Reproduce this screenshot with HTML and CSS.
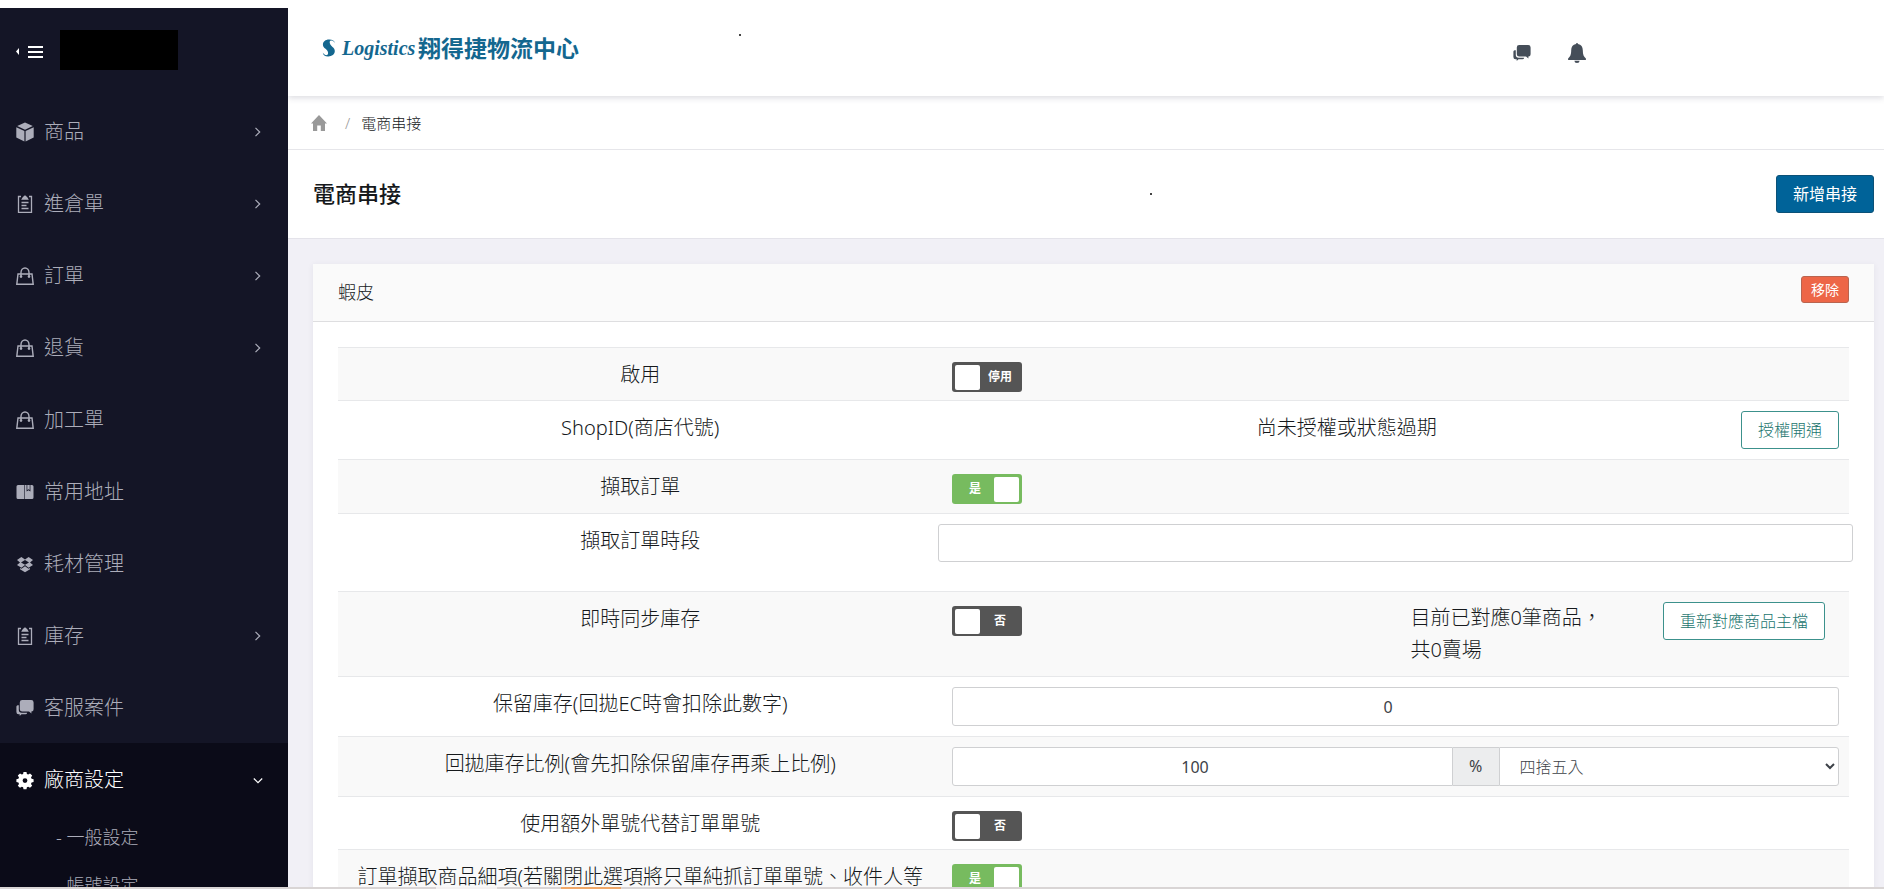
FILE: index.html
```html
<!DOCTYPE html>
<html lang="zh-Hant">
<head>
<meta charset="utf-8">
<meta name="viewport" content="width=device-width, initial-scale=1">
<title>電商串接</title>
<link rel="stylesheet" href="styles.css">
</head>
<body>
<svg class="sprite" aria-hidden="true">
  <symbol id="i-box" viewBox="0 0 18 20"><path fill="currentColor" d="M9 .4 16.800 4 9 7.700 1.200 4zM.3 5.300 8.400 9.100v10.500L.3 15.600zM17.700 5.300 9.600 9.100v10.500l8.100-4z"/></symbol>
  <symbol id="i-clip" viewBox="0 0 18 20"><path fill="none" stroke="currentColor" stroke-width="1.300" d="M5 2.500H2.500v15.800h13V2.500H13M5.500 8.500h7M5.500 11.500h5M5.500 14.500h7"/><path fill="currentColor" d="M5.200 5.800 6.500 3.500 7.500 2.500a1.600 1.600 0 0 1 3 0l1 1 1.300 2.300z"/></symbol>
  <symbol id="i-bag" viewBox="0 0 18 20"><path fill="none" stroke="currentColor" stroke-width="1.400" d="M2 8h14l1.200 10.300H.8zM5 11V6.500a4 4.500 0 0 1 8 0V11"/><circle cx="5" cy="10.600" r="1.300" fill="currentColor"/><circle cx="13" cy="10.600" r="1.300" fill="currentColor"/></symbol>
  <symbol id="i-book" viewBox="0 0 18 20"><path fill="currentColor" d="M2 3h6v14H2a1.500 1.500 0 0 1-1.500-1.500v-11A1.500 1.500 0 0 1 2 3zM8.600 3h2v6.500l1.900-1.300 1.900 1.300V3H16a1.500 1.500 0 0 1 1.500 1.500v11A1.500 1.500 0 0 1 16 17H8.600zM11.300 3h2.400v5l-1.200-.8-1.200.8z"/></symbol>
  <symbol id="i-drop" viewBox="0 0 18 20"><path fill="currentColor" d="m5.400 3 3.600 2.400L12.600 3 17 5.900l-3 2.500 3 2.500-4.400 2.900L9 11.100l-3.600 2.700L1 10.900l3-2.500-3-2.500zM9 6l-4 2.400L9 10.800l4-2.400zM9 12.200l3.600 2.600 1.400-.8v1.200L9 18.200l-5-3V14l1.400.8z"/></symbol>
  <symbol id="i-chat" viewBox="0 0 18 20"><path fill="currentColor" d="M6.200 2h9a2.400 2.400 0 0 1 2.400 2.400v6.800a2.400 2.400 0 0 1-2.200 2.400v2L13 13.600H6.200a2.400 2.400 0 0 1-2.400-2.400V4.400A2.400 2.400 0 0 1 6.200 2zM2.800 7.200v4.600a2.900 2.900 0 0 0 2.900 2.900h5.500a1.800 1.800 0 0 1-1.800 1.500H5.500L3.700 18v-1.800H2.600a2.200 2.200 0 0 1-2.200-2.200V8.500a1.600 1.600 0 0 1 1.200-1.300z"/></symbol>
  <symbol id="i-gear" viewBox="0 0 18 20"><path fill="currentColor" fill-rule="evenodd" d="M7.500 2h3l.4 2 1.300.6 1.800-1.100 2.200 2.100-1.200 1.800.6 1.400 2 .4v2.900l-2 .4-.6 1.400 1.200 1.800-2.200 2.100-1.800-1.100-1.300.6-.4 2h-3l-.4-2-1.300-.6L4 17.800l-2.200-2.100L3 13.900l-.6-1.400-2-.4V9.200l2-.4L3 7.400 1.800 5.600 4 3.500l1.800 1.100L7.100 4zM9 8.200a2.400 2.400 0 1 0 0 4.800 2.400 2.400 0 0 0 0-4.800z"/></symbol>
  <symbol id="i-bell" viewBox="0 0 18 20"><path fill="currentColor" d="M8 1a1 1 0 0 1 2 0c3.200.5 4.800 3 4.800 6.300 0 4.500 1 6.500 3.100 8.200v1.600H.1v-1.600c2.100-1.700 3.100-3.700 3.100-8.200C3.200 4 4.800 1.500 8 1zM6.400 17.800h5.200a2.600 2.200 0 0 1-5.200 0z"/></symbol>
  <symbol id="i-home" viewBox="0 0 16 16"><path fill="currentColor" d="m8 0 8 8.500h-2V16H9.800v-5.500H6.200V16H2V8.500H0z"/></symbol>
  <symbol id="i-next" viewBox="0 0 10 10"><path fill="none" stroke="currentColor" stroke-width="1.200" d="m2.500.8 4.200 4.200-4.200 4.200"/></symbol>
  <symbol id="i-down" viewBox="0 0 10 10"><path fill="none" stroke="currentColor" stroke-width="1.200" d="M.8 3.500 5 7.700l4.200-4.200"/></symbol>
</svg>

<div class="app">
  <nav class="sidebar" aria-label="主選單">
    <div class="brand">
      <button class="menu-btn" type="button" aria-label="收合選單">
        <svg width="28" height="14" viewBox="0 0 28 14"><path fill="currentColor" d="M3 3v7L0 6.500zM12 1h15v2H12zM12 6h15v2H12zM12 11h15v2H12z"/></svg>
      </button>
      <span class="account"></span>
    </div>
    <ul class="menu">
      <li><a href="#"><svg class="icon"><use href="#i-box"/></svg><span>商品</span><svg class="arrow"><use href="#i-next"/></svg></a></li>
      <li><a href="#"><svg class="icon"><use href="#i-clip"/></svg><span>進倉單</span><svg class="arrow"><use href="#i-next"/></svg></a></li>
      <li><a href="#"><svg class="icon"><use href="#i-bag"/></svg><span>訂單</span><svg class="arrow"><use href="#i-next"/></svg></a></li>
      <li><a href="#"><svg class="icon"><use href="#i-bag"/></svg><span>退貨</span><svg class="arrow"><use href="#i-next"/></svg></a></li>
      <li><a href="#"><svg class="icon"><use href="#i-bag"/></svg><span>加工單</span></a></li>
      <li><a href="#"><svg class="icon"><use href="#i-book"/></svg><span>常用地址</span></a></li>
      <li><a href="#"><svg class="icon"><use href="#i-drop"/></svg><span>耗材管理</span></a></li>
      <li><a href="#"><svg class="icon"><use href="#i-clip"/></svg><span>庫存</span><svg class="arrow"><use href="#i-next"/></svg></a></li>
      <li><a href="#"><svg class="icon"><use href="#i-chat"/></svg><span>客服案件</span></a></li>
      <li class="open">
        <a href="#"><svg class="icon"><use href="#i-gear"/></svg><span>廠商設定</span><svg class="arrow"><use href="#i-down"/></svg></a>
        <ul class="submenu">
          <li><a href="#">- 一般設定</a></li>
          <li><a href="#">- 帳號設定</a></li>
        </ul>
      </li>
    </ul>
  </nav>

  <div class="page">
    <header class="topbar">
      <a class="logo" href="#">
        <svg width="14" height="18" viewBox="0 0 14 18" aria-hidden="true"><path fill="currentColor" d="M13 4.200C11.800 2 10.300 1.300 8.900 1.600c-1.600.4-1.500 2.300-.4 4.100 1.500 2.300 4.300 3.100 4.300 6.300 0 3.300-3 5.300-6.500 5.500-3.100.1-5.300-1.300-5.500-3.700 1.500 1.900 2.900 2.700 4.300 2.200 1.500-.6 1.200-2.700.1-4.400C3.700 9.300.9 8.700.9 5.500.9 2.600 3.500.6 6.900.5c3.300-.1 5.900 1.300 6.100 3.700z"/></svg>
        <span class="logo-script">Logistics</span>
        <span class="logo-name">翔得捷物流中心</span>
      </a>
      <span class="speck"></span>
      <div class="tools">
        <button type="button" aria-label="訊息"><svg class="icon"><use href="#i-chat"/></svg></button>
        <button type="button" aria-label="通知"><svg class="icon"><use href="#i-bell"/></svg></button>
      </div>
    </header>

    <nav class="crumbs" aria-label="路徑">
      <a href="#" aria-label="首頁"><svg class="home"><use href="#i-home"/></svg></a>
      <span class="slash">/</span>
      <span>電商串接</span>
    </nav>

    <div class="titlebar">
      <h1>電商串接</h1>
      <span class="speck"></span>
      <button class="btn btn-primary" type="button">新增串接</button>
    </div>

    <main class="content">
      <section class="card">
        <header class="card-head">
          <h2>蝦皮</h2>
          <button class="btn btn-danger" type="button">移除</button>
        </header>
        <table class="settings">
          <tbody>
            <tr>
              <th scope="row"><label for="enable">啟用</label></th>
              <td><label class="switch"><input id="enable" type="checkbox"><span>停用</span></label></td>
            </tr>
            <tr>
              <th scope="row">ShopID(商店代號)</th>
              <td><div class="line"><span class="status">尚未授權或狀態過期</span><button class="btn btn-outline" type="button">授權開通</button></div></td>
            </tr>
            <tr class="fetch">
              <th scope="row"><label for="fetch">擷取訂單</label></th>
              <td><label class="switch"><input id="fetch" type="checkbox" checked><span>是</span></label></td>
            </tr>
            <tr>
              <th scope="row"><label for="period">擷取訂單時段</label></th>
              <td class="wide"><input class="field" id="period" type="text"></td>
            </tr>
            <tr>
              <th scope="row"><label for="sync">即時同步庫存</label></th>
              <td>
                <div class="sync">
                  <label class="switch"><input id="sync" type="checkbox"><span>否</span></label>
                  <span>目前已對應0筆商品，共0賣場</span>
                  <button class="btn btn-outline" type="button">重新對應商品主檔</button>
                </div>
              </td>
            </tr>
            <tr>
              <th scope="row"><label for="keep">保留庫存(回拋EC時會扣除此數字)</label></th>
              <td><input class="field" id="keep" type="number" value="0"></td>
            </tr>
            <tr>
              <th scope="row"><label for="ratio">回拋庫存比例(會先扣除保留庫存再乘上比例)</label></th>
              <td>
                <div class="group">
                  <input class="field" id="ratio" type="number" value="100">
                  <span class="unit">%</span>
                  <select class="field" aria-label="進位方式"><option>四捨五入</option></select>
                </div>
              </td>
            </tr>
            <tr>
              <th scope="row"><label for="extra">使用額外單號代替訂單單號</label></th>
              <td><label class="switch"><input id="extra" type="checkbox"><span>否</span></label></td>
            </tr>
            <tr>
              <th scope="row"><label for="detail">訂單擷取商品細項(若關閉此選項將只單純抓訂單單號、收件人等</label></th>
              <td><label class="switch"><input id="detail" type="checkbox" checked><span>是</span></label></td>
            </tr>
          </tbody>
        </table>
      </section>
    </main>
  </div>
</div>
<footer class="strip"><span class="strip-light"></span><span class="strip-accent"></span></footer>
</body>
</html>
```

FILE: styles.css
```css
* { box-sizing: border-box; }

body {
  margin: 0;
  padding-top: 8px;
  height: 100vh;
  display: flex;
  flex-direction: column;
  overflow: hidden;
  background: #fff;
  color: #16191c;
  font-family: "Noto Sans", "Noto Sans CJK TC", sans-serif;
  font-size: 20px;
  font-weight: 300;
  line-height: 32px;
}

button, input, select { font: inherit; }
a { color: inherit; text-decoration: none; }
ul { list-style: none; margin: 0; padding: 0; }
h1, h2 { margin: 0; }

.sprite { display: none; }
.icon { width: 18px; height: 20px; flex: none; }

.app {
  flex: 1;
  min-height: 0;
  display: flex;
}

/* Sidebar */
.sidebar {
  width: 288px;
  flex: none;
  overflow: hidden;
  background: #141526;
  color: #acadba;
}
.brand {
  display: flex;
  align-items: center;
  gap: 16px;
  height: 87px;
  padding: 0 16px 3px;
}
.menu-btn {
  display: flex;
  padding: 3px 0 0;
  border: 0;
  background: none;
  color: #fff;
}
.account { width: 118px; height: 40px; background: #000; }
.menu > li > a {
  display: flex;
  align-items: center;
  gap: 10px;
  height: 72px;
  padding: 2px 25px 0 16px;
}
.arrow { width: 10px; height: 10px; margin-left: auto; }
.open { background: #0b0b18; }
.menu > .open > a { color: #fff; }
.submenu a {
  display: block;
  height: 48px;
  padding-left: 56px;
  font-size: 18px;
  line-height: 44px;
}

/* Top bar */
.page {
  flex: 1;
  min-width: 0;
  display: flex;
  flex-direction: column;
  overflow: hidden;
}
.topbar {
  display: flex;
  flex: none;
  height: 88px;
  padding: 20px 298px 0 34px;
  box-shadow: 0 2px 6px rgba(60, 60, 90, .18);
  z-index: 1;
}
.logo {
  display: flex;
  align-items: center;
  align-self: flex-start;
  height: 40px;
  color: #14678f;
}
.logo-script {
  width: 76px;
  margin-left: 6px;
  font: italic bold 20px "Liberation Serif", serif;
}
.logo-name { font-size: 23px; font-weight: 700; line-height: 40px; }
.speck { width: 2px; height: 2px; background: #444; }
.topbar .speck { margin: 6px 0 0 160px; }
.tools {
  display: flex;
  gap: 37px;
  margin: 15px 0 0 auto;
  align-self: flex-start;
}
.tools button {
  display: flex;
  padding: 0;
  border: 0;
  background: none;
  color: #454e59;
}

.crumbs {
  display: flex;
  align-items: center;
  flex: none;
  height: 54px;
  padding-left: 23px;
  border-bottom: 1px solid #e6e6ea;
  font-size: 15px;
}
.crumbs a { display: flex; color: #999; }
.home { width: 16px; height: 16px; }
.slash { margin: 0 11px 0 18px; color: #999; }

.titlebar {
  display: flex;
  align-items: center;
  flex: none;
  height: 89px;
  padding: 0 10px 0 25px;
  border-bottom: 1px solid #e4e3ea;
}
.titlebar h1 { padding-bottom: 2px; font-size: 22px; font-weight: 500; }
.titlebar .speck { margin-left: 48%; }
.titlebar .btn { margin-left: auto; }

.btn {
  flex: none;
  height: 38px;
  padding: 0 16px;
  border: 1px solid;
  border-radius: 3px;
  font-size: 16px;
  line-height: 36px;
}
.btn-primary { background: #006399; border-color: #0b5178; color: #fff; font-weight: 400; }
.btn-danger {
  height: 27px;
  padding: 0 9px;
  background: #ed6647;
  border-color: #b9644f;
  color: #fff;
  font-size: 14px;
  font-weight: 400;
  line-height: 25px;
}
.btn-outline { background: #fff; border-color: #3c918c; color: #1b756e; }

/* Card */
.content {
  flex: 1;
  padding: 25px 10px 0 25px;
  background: #f1f0f6;
}
.card { background: #fff; box-shadow: 0 1px 6px rgba(60, 60, 90, .07); }
.card-head {
  display: flex;
  justify-content: space-between;
  height: 58px;
  padding: 12px 25px 0;
  background: #fafafa;
  border-bottom: 1px solid #dedee0;
}
.card-head h2 { font-size: 18px; font-weight: 300; }

.settings {
  width: calc(100% - 50px);
  margin: 25px 25px 0;
  border-collapse: separate;
  border-spacing: 0;
  table-layout: fixed;
}
.settings th, .settings td {
  padding: 10px;
  border-top: 1px solid #e7e8ea;
  font-weight: 300;
  vertical-align: top;
}
.settings th { width: 40%; padding: 11px 10px 9px; text-align: center; }
.settings tr:nth-child(odd) { background: #f9f9f9; }
.settings .fetch { height: 54px; }
.settings .wide { padding: 10px 0 29px; }
.wide .field { display: block; width: calc(100% + 8px); margin-left: -4px; }

.switch {
  display: flex;
  align-items: center;
  width: 70px;
  height: 30px;
  margin: 4px 0 -2px;
  padding: 2px 3px;
  border-radius: 3px;
  background: #555;
  color: #fff;
  font-size: 12px;
  font-weight: 700;
}
.switch input {
  appearance: none;
  flex: none;
  width: 25px;
  height: 25px;
  margin: 0;
  border-radius: 2px;
  background: #fff;
}
.switch span { flex: 1; text-align: center; }
.switch:has(:checked) { flex-direction: row-reverse; background: #77bb5f; }

.line { display: flex; }
.status { flex: 1; padding-top: 1px; text-align: center; }
.sync {
  display: grid;
  grid-template-columns: 458px 199px 1fr;
  align-items: start;
}
.sync .btn { justify-self: end; margin-right: 14px; }

.field {
  width: 100%;
  height: 39px;
  padding: 0 16px;
  border: 1px solid #cfd0d2;
  border-radius: 3px;
  background: #fff;
  color: #3d4248;
  font-size: 16px;
}
td > .field { display: block; }
.field[type="text"] { height: 38px; }
.field[type="number"] { font-weight: 400; text-align: center; }
.group { display: flex; }
.group .field[type="number"] { flex: 1; width: 0; border-radius: 3px 0 0 3px; }
.group select { flex: none; width: 38.400%; border-radius: 0 3px 3px 0; }
.unit {
  width: 46px;
  border: solid #cfd0d2;
  border-width: 1px 0;
  background: #ecedee;
  color: #3d4248;
  font-size: 16px;
  font-weight: 400;
  line-height: 37px;
  text-align: center;
}

.strip { display: flex; flex: none; height: 2px; background: #d9d5d5; }
.strip-light { width: 61px; margin-left: 436px; background: #f4f2f2; }
.strip-accent { width: 60px; margin-left: 64px; background: #f0a868; }
```
